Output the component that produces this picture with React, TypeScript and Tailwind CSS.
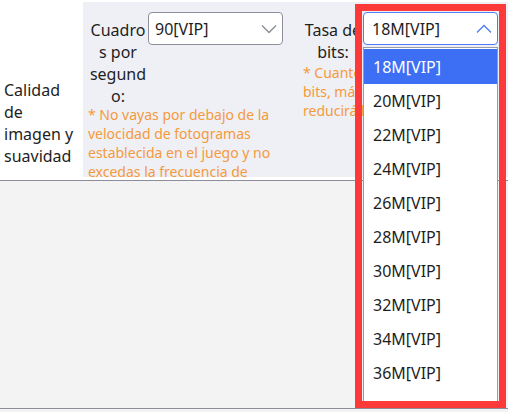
import React from "react";

const FPS_NOTE = "* No vayas por debajo de la velocidad de fotogramas establecida en el juego y no excedas la frecuencia de actualización de tu pantalla.";

const BITRATES = ["18M[VIP]", "20M[VIP]", "22M[VIP]", "24M[VIP]", "26M[VIP]", "28M[VIP]", "30M[VIP]", "32M[VIP]", "34M[VIP]", "36M[VIP]", "38M[VIP]"];

function Chevron({ up = false, color }: { up?: boolean; color: string }) {
    return (
        <svg width="16" height="10" viewBox="0 0 16 10" fill="none">
            <polyline
                points={up ? "1,8.5 8,1.5 15,8.5" : "1,1.5 8,8.5 15,1.5"}
                stroke={color}
                strokeWidth="1.3"
            />
        </svg>
    );
}

type FieldProps = {
    label: string;
    value: string;
    open?: boolean;
    note: React.ReactNode;
};

function Field({ label, value, open = false, note }: FieldProps) {
    return (
        <div className="w-[195px] shrink-0 flex flex-col">
            <div className="flex items-start">
                <div className="w-[60px] pt-[7px] text-center text-[16px] leading-[22px] text-[#1e1e1e] [overflow-wrap:anywhere]">
                    {label}
                </div>
                <div
                    className={
                        open
                            ? "w-[135px] h-[33px] bg-white border border-[#4d7ef7] rounded-[4px] flex items-center justify-between pl-[8px] pr-[5px]"
                            : "w-[135px] h-[33px] bg-white border border-[#8e8e9c] rounded-[4px] flex items-center justify-between pl-[6px] pr-[5px]"
                    }
                >
                    <span className="text-[16px] text-[#1e1e1e]">{value}</span>
                    <Chevron up={open} color={open ? "#4d7ef7" : "#8a8a94"} />
                </div>
            </div>
            <div className="text-[14px] leading-[19px] text-[#f59a3c] mt-[-2px]">{note}</div>
        </div>
    );
}

export default function App() {
    return (
        <div className="relative w-[508px] h-[412px] overflow-hidden bg-[#f3f3f3] font-['Noto_Sans',sans-serif]">
            {/* settings row */}
            <div className="flex h-[181px] bg-white border-b border-[#8c8c9a] pt-[2px] pb-[3px]">
                <div className="w-[83px] shrink-0 pl-[4px] pr-[4px] pt-[77px] text-[16px] leading-[22px] text-[#1e1e1e]">
                    Calidad de imagen y suavidad
                </div>
                <div className="flex-1 flex gap-[20px] bg-[#eef0f5] pl-[5px] pt-[10px] overflow-hidden">
                    <Field label="Cuadros por segundo:" value="90[VIP]" note={FPS_NOTE} />
                    <Field
                        label="Tasa de bits:"
                        value="18M[VIP]"
                        open
                        note={
                            <div className="mt-[2px] whitespace-nowrap">
                                * Cuanto mayor sea la tasa
                                <br />
                                bits, más nítida la imagen
                                <br />
                                reducirá la fluidez.
                            </div>
                        }
                    />
                </div>
            </div>

            <div className="h-[228px] border-b border-[#8c8c9a]" />

            {/* open dropdown list */}
            <div className="absolute left-[363px] top-[47px] w-[135px] h-[356px] overflow-hidden bg-white border border-[#9a9aa6] pt-[1px]">
                {BITRATES.map((rate, i) => (
                    <div
                        key={rate}
                        className={
                            i === 0
                                ? "h-[35px] flex items-center pl-[9px] text-[16px] bg-[#3d6ff5] text-white"
                                : "h-[34px] flex items-center pl-[9px] text-[16px] text-[#1e1e1e]"
                        }
                    >
                        {rate}
                    </div>
                ))}
            </div>

            {/* red highlight frame */}
            <div className="absolute left-[355px] top-[4px] w-[151px] h-[404px] border-[7px] border-[#fd3a3a]" />
        </div>
    );
}
